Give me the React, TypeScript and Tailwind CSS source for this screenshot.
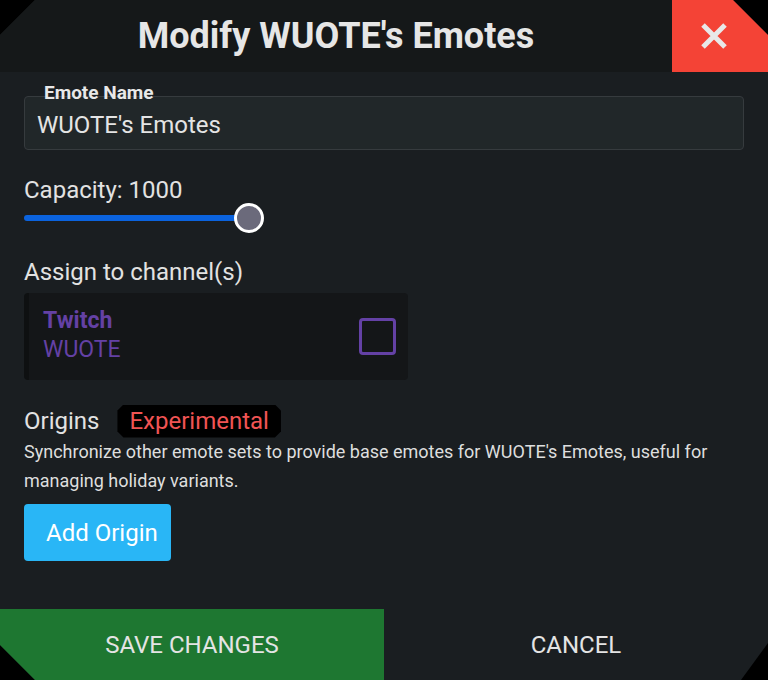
import React from 'react'

function CloseIcon() {
    return (
        <svg width="30" height="30" viewBox="0 0 30 30" fill="none">
            <path d="M4 4 L26 26 M26 4 L4 26" stroke="#e8e8e8" strokeWidth="5" />
        </svg>
    )
}

export default function App() {
    return (
        <div className="w-[768px] h-[680px] bg-black font-['Roboto',sans-serif]">
            <div className="w-full h-full flex flex-col bg-[#1a1e21] [clip-path:polygon(35px_0,calc(100%-35px)_0,100%_35px,100%_calc(100%-37px),calc(100%-27px)_100%,35px_100%,0_calc(100%-35px),0_35px)]">
                {/* Header */}
                <div className="h-[72px] shrink-0 flex bg-[#151819]">
                    <div className="flex-1 flex items-center justify-center">
                        <h1 className="text-[36px] font-bold text-[#e6e6e6] leading-none">Modify WUOTE's Emotes</h1>
                    </div>
                    <button className="w-[96px] h-full bg-[#f44336] flex items-center justify-center pr-3">
                        <CloseIcon />
                    </button>
                </div>

                {/* Body */}
                <div className="flex-1 px-6 pt-6 flex flex-col">
                    <div className="relative">
                        <span className="absolute -top-[15px] left-[20px] text-[19px] leading-6 font-bold text-[#e8e8e8]">Emote Name</span>
                        <div className="h-[54px] rounded-[4px] border border-[#363b3e] bg-[#212729] flex items-center px-3 pt-1">
                            <span className="text-[24px] text-[#e4e4e4]">WUOTE's Emotes</span>
                        </div>
                    </div>

                    <div className="mt-[26px] text-[24px] leading-7 text-[#e2e2e2]">Capacity: 1000</div>
                    <div className="flex items-center w-[240px] h-7">
                        <div className="flex-1 h-[6px] rounded-full bg-[#0b63de]" />
                        <div className="w-[30px] h-[30px] -ml-[15px] rounded-full border-[3px] border-white bg-[#6b6a7b]" />
                    </div>

                    <div className="mt-[26px] text-[24px] leading-7 text-[#e2e2e2]">Assign to channel(s)</div>
                    <div className="mt-[7px] w-[384px] h-[87px] rounded-[4px] bg-[#141618] border-l-[5px] border-[#0e1011] flex items-center justify-between pl-[14px] pr-[12px]">
                        <div className="flex flex-col text-[23px] leading-[29px] text-[#6441a5] -mt-1">
                            <span className="font-bold">Twitch</span>
                            <span>WUOTE</span>
                        </div>
                        <div className="w-[37px] h-[37px] rounded-[4px] border-[3px] border-[#6441a5]" />
                    </div>

                    <div className="mt-[23px] flex items-center gap-[18px]">
                        <span className="text-[24px] text-[#e2e2e2]">Origins</span>
                        <span className="h-[33px] px-[12px] flex items-center bg-black text-[24px] text-[#f05454] [clip-path:polygon(6px_0,calc(100%-6px)_0,100%_6px,100%_calc(100%-6px),calc(100%-6px)_100%,6px_100%,0_calc(100%-6px),0_6px)]">Experimental</span>
                    </div>
                    <p className="-mt-[2px] text-[18px] leading-[29px] text-[#dedede]">
                        Synchronize other emote sets to provide base emotes for WUOTE's Emotes, useful for managing holiday variants.
                    </p>
                    <div className="mt-[9px]">
                        <button className="h-[57px] w-[147px] rounded-[4px] bg-[#29b6f6] text-[24px] text-white pl-[22px] text-left">Add Origin</button>
                    </div>
                </div>

                {/* Footer */}
                <div className="h-[71px] shrink-0 flex">
                    <button className="flex-1 bg-[#1e7731] text-[24px] text-[#e4e4e4] flex items-center justify-center">SAVE CHANGES</button>
                    <button className="flex-1 text-[24px] text-[#e4e4e4] flex items-center justify-center">CANCEL</button>
                </div>
            </div>
        </div>
    )
}
